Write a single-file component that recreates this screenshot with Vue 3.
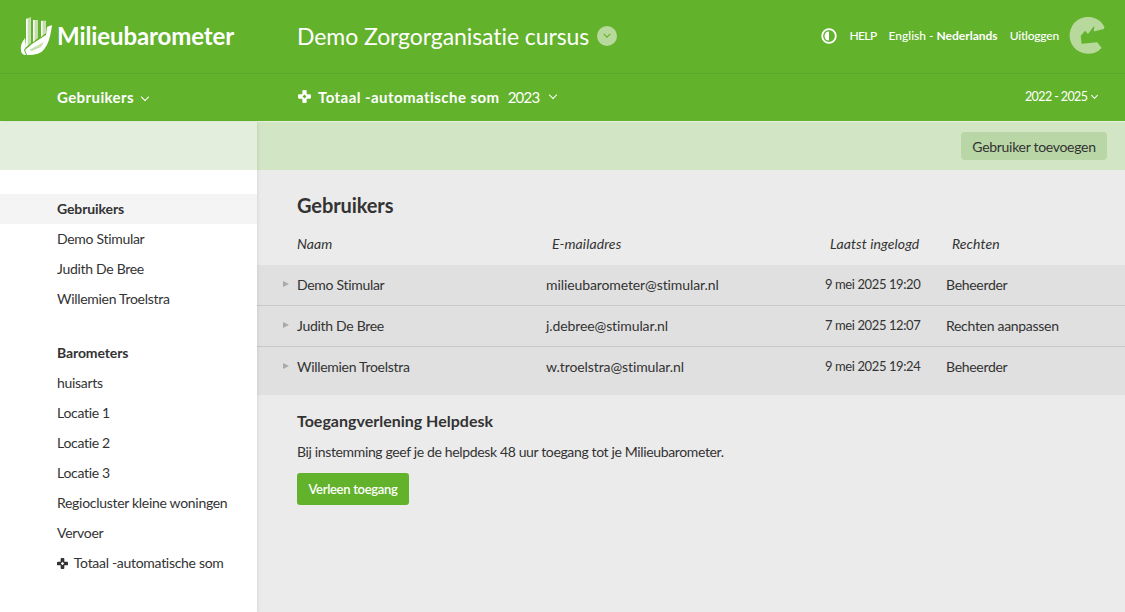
<script setup>
const users = [
  { name: 'Demo Stimular', email: 'milieubarometer@stimular.nl', last: '9 mei 2025 19:20', rights: 'Beheerder' },
  { name: 'Judith De Bree', email: 'j.debree@stimular.nl', last: '7 mei 2025 12:07', rights: 'Rechten aanpassen' },
  { name: 'Willemien Troelstra', email: 'w.troelstra@stimular.nl', last: '9 mei 2025 19:24', rights: 'Beheerder' },
]
const sideUsers = ['Demo Stimular', 'Judith De Bree', 'Willemien Troelstra']
const barometers = ['huisarts', 'Locatie 1', 'Locatie 2', 'Locatie 3', 'Regiocluster kleine woningen', 'Vervoer']
</script>

<template>
  <div class="page">
    <header class="top">
      <div class="brand">
        <svg class="logo" viewBox="0 0 32 38" width="32" height="38">
          <path d="M6 2l5-2v26l-5 4z" fill="#c5e0ae" />
          <path d="M6 2l1.600-.6v27.300l-1.600 1.300z" fill="#fff" />
          <path d="M13 3h5v18l-5 4z" fill="#c5e0ae" />
          <path d="M13 3h1.500v20.800l-1.500 1.200z" fill="#fff" />
          <path d="M21 4l5-.5V16l-5 4z" fill="#c5e0ae" />
          <path d="M21 4l1.500-.2v15l-1.500 1.200z" fill="#fff" />
          <path d="M32 8l-5 2-1 8-14 9-7 6 2 5c9 0 14-1 18-7 4-5 6-15 7-23z" fill="#fff" />
          <path d="M5 21c-3 4-5 8-4 12 0 3 2 5 5 5l-2-5 2-3z" fill="#fff" />
          <path d="M9 33l15-8-3 5-9 4z" fill="#c5e0ae" />
        </svg>
        <span class="brand-name">Milieubarometer</span>
      </div>
      <div class="org">
        <span>Demo Zorgorganisatie cursus</span>
        <span class="org-toggle">
          <svg viewBox="0 0 10 6" width="8" height="5"><path d="M1 1l4 4 4-4" fill="none" stroke="#62b22c" stroke-width="1.400" /></svg>
        </span>
      </div>
      <nav class="top-links">
        <svg viewBox="0 0 16 16" width="16" height="16">
          <circle cx="8" cy="8" r="6.800" fill="none" stroke="#fff" stroke-width="1.800" />
          <path d="M8 3.500a4.500 4.500 0 0 0 0 9z" fill="#fff" />
        </svg>
        <a class="help">HELP</a>
        <span class="lang">English - <b>Nederlands</b></span>
        <a class="logout">Uitloggen</a>
      </nav>
      <svg class="avatar" viewBox="0 0 38 38" width="37" height="38">
        <path d="M36.400 9.500A19 19 0 1 0 33.500 31.300L29 25.500 13 27 12 19l4.500-5.500 3 3.500 6.500-8.500-.5 6 10.200-2.700z" fill="#b7d99b" />
      </svg>
    </header>

    <div class="subbar">
      <button class="sub-users">Gebruikers <i class="chev"></i></button>
      <div class="sub-select">
        <svg class="plus" viewBox="0 0 12 12" width="13" height="13">
          <path d="M5 0h2q1 0 1 1v3h3q1 0 1 1v2q0 1-1 1H8v3q0 1-1 1H5q-1 0-1-1V8H1q-1 0-1-1V5q0-1 1-1h3V1q0-1 1-1z" fill="#fff" />
          <path d="M6 4.200L7.800 6 6 7.800 4.200 6z" fill="#62b22c" />
        </svg>
        <b>Totaal -automatische som</b>
        <span class="year">2023</span>
        <i class="chev"></i>
      </div>
      <div class="sub-years">2022 - 2025 <i class="chev small"></i></div>
    </div>

    <div class="body">
      <aside class="side">
        <div class="side-spacer"></div>
        <ul class="side-list">
          <li class="side-head active">Gebruikers</li>
          <li v-for="u in sideUsers" :key="u">{{ u }}</li>
        </ul>
        <ul class="side-list second">
          <li class="side-head">Barometers</li>
          <li v-for="b in barometers" :key="b">{{ b }}</li>
          <li class="with-icon">
            <svg viewBox="0 0 12 12" width="11" height="11">
              <path d="M5 0h2q1 0 1 1v3h3q1 0 1 1v2q0 1-1 1H8v3q0 1-1 1H5q-1 0-1-1V8H1q-1 0-1-1V5q0-1 1-1h3V1q0-1 1-1z" fill="#333" />
              <path d="M6 4.200L7.800 6 6 7.800 4.200 6z" fill="#fff" />
            </svg>
            Totaal -automatische som
          </li>
        </ul>
      </aside>

      <main class="main">
        <div class="toolbar">
          <button class="add-btn">Gebruiker toevoegen</button>
        </div>
        <h1>Gebruikers</h1>
        <div class="cols">
          <span class="c-name">Naam</span>
          <span class="c-mail">E-mailadres</span>
          <span class="c-last">Laatst ingelogd</span>
          <span class="c-rights">Rechten</span>
        </div>
        <div class="rows">
          <div v-for="u in users" :key="u.email" class="row">
            <span class="tri"></span>
            <span class="r-name">{{ u.name }}</span>
            <span class="r-mail">{{ u.email }}</span>
            <span class="r-last">{{ u.last }}</span>
            <span class="r-rights">{{ u.rights }}</span>
          </div>
        </div>
        <section class="helpdesk">
          <h2>Toegangverlening Helpdesk</h2>
          <p>Bij instemming geef je de helpdesk 48 uur toegang tot je Milieubarometer.</p>
          <button class="grant">Verleen toegang</button>
        </section>
      </main>
    </div>
  </div>
</template>

<style>
html, body { margin: 0; background: #ebebeb; }
</style>

<style scoped>
.page {
  width: 1125px;
  height: 612px;
  overflow: hidden;
  font-family: "Lato", "Open Sans", sans-serif;
  font-size: 14px;
  font-variant-ligatures: none;
  letter-spacing: -0.3px;
  color: #333;
  display: flex;
  flex-direction: column;
}
.top {
  height: 71px;
  padding-bottom: 2px;
  background: #62b22c;
  border-bottom: 1px solid #5ba729;
  display: flex;
  align-items: center;
  color: #fff;
}
.brand {
  width: 297px;
  display: flex;
  align-items: center;
  padding-left: 20px;
  box-sizing: border-box;
  flex: none;
}
.logo { margin-right: 5px; }
.brand-name { font-size: 24px; font-weight: 700; letter-spacing: -0.1px; }
.org {
  display: flex;
  align-items: center;
  gap: 8px;
  font-size: 23px;
  letter-spacing: -0.08px;
  flex: 1;
}
.org-toggle {
  width: 20px;
  height: 20px;
  border-radius: 50%;
  background: #b7d99b;
  display: flex;
  align-items: center;
  justify-content: center;
}
.top-links {
  display: flex;
  align-items: center;
  font-size: 12px;
  font-weight: 500;
  letter-spacing: 0;
  gap: 12px;
}
.help { letter-spacing: -0.6px; }
.logout { letter-spacing: -0.2px; }
.lang b { font-weight: 700; }
.avatar { margin: 0 19px 0 10px; }
.subbar {
  height: 45px;
  padding-bottom: 2px;
  background: #62b22c;
  color: #fff;
  display: flex;
  align-items: center;
  border-bottom: 1px solid #e4efdc;
}
.sub-users {
  width: 240px;
  margin-left: 57px;
  flex: none;
  padding: 0;
  border: 0;
  background: none;
  color: #fff;
  font: 700 15px "Lato", sans-serif;
  letter-spacing: 0.4px;
  text-align: left;
}
.chev {
  display: inline-block;
  width: 5px;
  height: 5px;
  border-right: 1.5px solid #fff;
  border-bottom: 1.5px solid #fff;
  transform: rotate(45deg);
  margin: 0 0 3px 4px;
}
.chev.small { width: 4px; height: 4px; margin-left: 2px; }
.sub-select {
  display: flex;
  align-items: center;
  gap: 8px;
  font-size: 15px;
  letter-spacing: 0.45px;
  flex: 1;
}
.sub-select .plus { margin: 0 -1px 0 1px; }
.sub-select .chev { margin-left: 2px; }
.year { letter-spacing: -0.7px; }
.sub-years { font-size: 12.5px; letter-spacing: -0.6px; margin-right: 28px; }
.body { flex: 1; display: flex; min-height: 0; }
.side {
  width: 257px;
  flex: none;
  background: #fff;
  box-shadow: 1px 0 3px rgba(0, 0, 0, 0.08);
  z-index: 1;
}
.side-spacer { height: 48px; background: #e3efdc; margin-bottom: 24px; }
.side-list { list-style: none; margin: 0; padding: 0; }
.side-list li {
  height: 30px;
  line-height: 30px;
  padding-left: 57px;
  font-size: 14px;
}
.side-list .side-head { font-weight: 700; letter-spacing: -0.1px; }
.side-list .active { background: #f4f4f4; }
.second { margin-top: 24px !important; }
.with-icon svg { margin-right: 3px; vertical-align: -1px; }
.main { flex: 1; background: #ebebeb; min-width: 0; }
.toolbar {
  height: 48px;
  background: #d2e5c5;
  display: flex;
  align-items: center;
  justify-content: flex-end;
  padding-right: 18px;
}
.add-btn {
  height: 28px;
  width: 146px;
  border: 0;
  border-radius: 4px;
  background: #b9d6a6;
  color: #333;
  font: 14px "Lato", sans-serif;
  letter-spacing: -0.3px;
}
h1 {
  margin: 22px 0 0 40px;
  font-size: 20px;
  line-height: 26px;
  font-weight: 700;
  letter-spacing: -0.1px;
}
.cols {
  height: 34px;
  margin: 8px 0 5px;
  display: flex;
  align-items: center;
  font-style: italic;
  font-size: 14px;
  letter-spacing: 0.1px;
}
.c-name { margin-left: 40px; width: 255px; }
.c-mail { width: 278px; }
.c-last { width: 122px; }
.rows { background: #e0e0e0; padding-bottom: 8px; }
.row {
  height: 38px;
  padding-bottom: 2px;
  display: flex;
  align-items: center;
  border-bottom: 1px solid #c9c9c9;
}
.row:last-child { border-bottom: 0; }
.tri {
  width: 0;
  height: 0;
  margin-left: 26px;
  margin-right: 8px;
  border-left: 6px solid #aaa;
  border-top: 3.5px solid transparent;
  border-bottom: 3.5px solid transparent;
}
.r-name { width: 249px; }
.r-mail { width: 279px; letter-spacing: -0.1px; }
.r-last { width: 121px; font-size: 13px; letter-spacing: -0.4px; }
.helpdesk { margin-left: 40px; padding-top: 16px; }
h2 { margin: 0; font-size: 16px; line-height: 20px; font-weight: 700; letter-spacing: 0; }
.helpdesk p { margin: 12px 0 0; line-height: 18px; letter-spacing: -0.36px; }
.grant {
  margin-top: 12px;
  height: 32px;
  width: 112px;
  border: 0;
  border-radius: 3px;
  background: #62b22c;
  color: #fff;
  font: 600 13px "Lato", sans-serif;
  letter-spacing: -0.3px;
}
</style>
